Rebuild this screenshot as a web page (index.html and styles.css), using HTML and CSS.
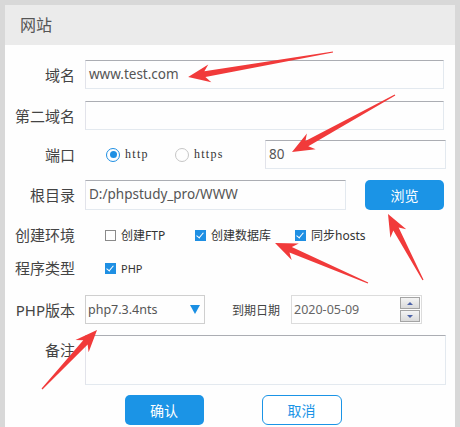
FILE: index.html
```html
<!DOCTYPE html>
<html lang="zh-CN">
<head>
  <meta charset="UTF-8">
  <meta name="viewport" content="width=device-width, initial-scale=1.0">
  <title>网站</title>
  <link rel="stylesheet" href="styles.css">
</head>
<body>
  <div class="screen">
    <div class="dialog">
      <div class="title">网站</div>
      <div class="form">
        <div class="row row1">
          <span class="lbl">域名</span>
          <div class="txt">www.test.com</div>
        </div>
        <div class="row row2">
          <span class="lbl">第二域名</span>
          <div class="txt"></div>
        </div>
        <div class="row row3">
          <span class="lbl">端口</span>
          <div class="radios">
            <span class="radio on"></span><span class="rtext">http</span>
            <span class="radio"></span><span class="rtext">https</span>
          </div>
          <div class="txt">80</div>
        </div>
        <div class="row row4">
          <span class="lbl">根目录</span>
          <div class="txt">D:/phpstudy_pro/WWW</div>
          <button class="btn browse">浏览</button>
        </div>
        <div class="row row5">
          <span class="lbl">创建环境</span>
          <div class="checks">
            <span class="chk-item w1"><i class="chk"></i>创建FTP</span>
            <span class="chk-item w2"><i class="chk on"></i>创建数据库</span>
            <span class="chk-item"><i class="chk on"></i>同步hosts</span>
          </div>
        </div>
        <div class="row row6">
          <span class="lbl">程序类型</span>
          <div class="checks">
            <span class="chk-item php"><i class="chk on"></i>PHP</span>
          </div>
        </div>
        <div class="row row7">
          <span class="lbl">PHP版本</span>
          <div class="select">
            <span>php7.3.4nts</span>
            <i class="caret"></i>
          </div>
          <span class="sublbl">到期日期</span>
          <div class="date">
            <span>2020-05-09</span>
            <div class="spin">
              <b class="up"></b>
              <b class="down"></b>
            </div>
          </div>
        </div>
        <div class="row row8">
          <span class="lbl">备注</span>
          <div class="txt area"></div>
        </div>
        <div class="actions">
          <button class="btn ok">确认</button>
          <button class="btn cancel">取消</button>
        </div>
      </div>
    </div>

    <!-- 标注箭头 -->
    <svg class="marks" width="460" height="427" viewBox="0 0 460 427">
      <g fill="#f13a3a">
        <polygon transform="translate(333 52) rotate(170.2)" points="0,-0.6 130,-3 125,-9 147,0 125,9 130,3 0,0.6"/>
        <polygon transform="translate(395 95) rotate(151.05)" points="0,-0.6 100.7,-3 95.7,-9 117.7,0 95.7,9 100.7,3 0,0.6"/>
        <polygon transform="translate(423 280) rotate(-117.93)" points="0,-0.6 57.7,-3 52.7,-9 74.7,0 52.7,9 57.7,3 0,0.6"/>
        <polygon transform="translate(368 283) rotate(-156.73)" points="0,-0.6 84.2,-3 79.2,-9 101.2,0 79.2,9 84.2,3 0,0.6"/>
        <polygon transform="translate(42 389) rotate(-47)" points="0,-0.6 63.7,-3 58.7,-9 80.7,0 58.7,9 63.7,3 0,0.6"/>
      </g>
    </svg>
  </div>
</body>
</html>
```

FILE: styles.css
```css
* {
  margin: 0;
  padding: 0;
  box-sizing: border-box;
}
body {
  background: #d8d8d8;
  font-family: "Noto Sans", "Noto Sans CJK SC", sans-serif;
  color: #444;
}
.screen {
  position: relative;
  width: 460px;
  height: 427px;
  overflow: hidden;
}
.dialog {
  margin: 5px 0 0 5px;
  width: 450px;
  height: 422px;
  background: #fefefe;
}
.title {
  height: 40px;
  line-height: 40px;
  padding-left: 15px;
  background: #ebebeb;
  font-size: 16px;
  color: #555;
}
.form {
  padding: 15px 11px 0 0;
}
.row {
  display: flex;
  align-items: center;
}
.lbl {
  width: 70px;
  margin-right: 10px;
  text-align: right;
  font-size: 15px;
  line-height: 20px;
  color: #444;
  flex-shrink: 0;
}
.txt {
  flex: 1;
  height: 100%;
  border: 1px solid;
  border-color: #abadb3 #e3e9ef #e3e9ef #e2e3ea;
  padding-left: 3px;
  font-size: 13.5px;
  line-height: 27px;
  color: #555;
}
.row1 { height: 29px; margin-bottom: 12px; }
.row2 { height: 29px; margin-bottom: 10px; }
.row3 { height: 29px; margin-bottom: 11px; }
.row4 { height: 30px; margin-bottom: 14px; }
.row5 { height: 22px; margin-bottom: 11px; }
.row6 { height: 22px; margin-bottom: 16px; }
.row7 { height: 29px; margin-bottom: 11px; }
.row8 { height: 50px; margin-bottom: 10px; align-items: flex-start; }
.row8 .lbl { padding-top: 5px; }

/* 端口 */
.radios {
  width: 180px;
  display: flex;
  align-items: center;
  padding-left: 21px;
}
.radio {
  width: 14px;
  height: 14px;
  border: 1px solid #c6c6c6;
  border-radius: 50%;
  display: flex;
  align-items: center;
  justify-content: center;
}
.radio.on {
  border-color: #1e8fe3;
}
.radio.on::after {
  content: "";
  width: 7px;
  height: 7px;
  border-radius: 50%;
  background: #1e8fe3;
}
.rtext {
  margin-left: 5px;
  margin-right: 26px;
  font-family: "Liberation Serif", serif;
  font-size: 12px;
  letter-spacing: 1.3px;
  color: #333;
}
.row3 .txt { margin-right: -2px; }

/* 根目录 */
.btn {
  border: none;
  border-radius: 5px;
  font-family: "Noto Sans CJK SC", sans-serif;
  font-size: 14px;
  cursor: pointer;
}
.browse {
  width: 79px;
  height: 30px;
  margin-left: 19px;
  background: #1b94e6;
  color: #fff;
}

/* 复选框 */
.checks {
  display: flex;
  align-items: center;
  padding-left: 20px;
}
.chk-item {
  display: flex;
  align-items: center;
  font-size: 12px;
  color: #333;
}
.chk-item.w1 { width: 90px; }
.chk-item.w2 { width: 100px; }
.chk-item.php { font-size: 11px; }
.chk {
  width: 11px;
  height: 11px;
  margin-right: 5px;
  border: 1px solid #8a8a8a;
  position: relative;
}
.chk.on {
  border-color: #1e8fe3;
  background: #1e8fe3;
}
.chk.on::after {
  content: "";
  position: absolute;
  left: 2px;
  top: 0;
  width: 3px;
  height: 6px;
  border: solid #fff;
  border-width: 0 1.5px 1.5px 0;
  transform: rotate(40deg);
}

/* PHP版本 / 到期日期 */
.select {
  width: 120px;
  height: 100%;
  border: 1px solid #cfcfcf;
  display: flex;
  align-items: center;
  justify-content: space-between;
  padding: 0 3px 0 2px;
  font-size: 12.5px;
  color: #555;
}
.caret {
  width: 0;
  height: 0;
  border-left: 5px solid transparent;
  border-right: 5px solid transparent;
  border-top: 9px solid #1a8fe3;
  margin-right: 1px;
}
.sublbl {
  margin-left: 27px;
  margin-right: 11px;
  font-size: 12px;
  color: #444;
}
.date {
  width: 131px;
  height: 100%;
  border: 1px solid #dcdcdc;
  display: flex;
  align-items: center;
  justify-content: space-between;
  padding: 0 1px 0 2px;
  font-size: 12.5px;
  color: #666;
}
.spin {
  display: flex;
  flex-direction: column;
  gap: 1px;
}
.spin b {
  width: 20px;
  height: 12px;
  border: 1px solid #a4a4a4;
  background: linear-gradient(#f4f4f4, #dadada);
  display: flex;
  align-items: center;
  justify-content: center;
}
.spin b::after {
  content: "";
  border-left: 3px solid transparent;
  border-right: 3px solid transparent;
}
.spin .up::after { border-bottom: 3px solid #4d63a8; }
.spin .down::after { border-top: 3px solid #4d63a8; }

.area {
  height: 50px;
  margin-right: -2px;
}

/* 底部按钮 */
.actions {
  display: flex;
  justify-content: center;
  gap: 58px;
  padding-left: 17px;
}
.ok {
  width: 79px;
  height: 30px;
  background: #1b94e6;
  color: #fff;
}
.cancel {
  width: 80px;
  height: 30px;
  background: #fff;
  border: 1px solid #1b94e6;
  border-radius: 6px;
  color: #1b94e6;
}

.marks {
  position: absolute;
  left: 0;
  top: 0;
  pointer-events: none;
}
```
